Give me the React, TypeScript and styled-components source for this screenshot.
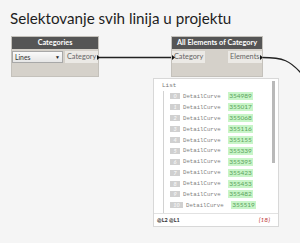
import styled, { createGlobalStyle } from "styled-components"

const GlobalStyle = createGlobalStyle`
  html, body {
    margin: 0;
    padding: 0;
    background: #f5f5f5;
  }
  #root {
    width: 300px;
    height: 243px;
    overflow: hidden;
  }
`

const items = [
  "354989", "355017", "355068", "355116", "355155", "355339",
  "355395", "355423", "355453", "355482", "355519",
]

const Page = styled.div`
  position: relative;
  width: 300px;
  height: 243px;
  background: #f5f5f5;
  font-family: Lato, "Noto Sans", sans-serif;
  white-space: nowrap;
`

const Title = styled.h1`
  margin: 0;
  padding: 9px 0 0 10px;
  font-family: Lato, "Noto Sans", sans-serif;
  font-size: 15.2px;
  line-height: 18px;
  font-weight: 400;
  color: #1e1e1e;
`

const Wires = styled.svg`
  position: absolute;
  left: 0;
  top: 0;
  pointer-events: none;
`

const NodeBox = styled.div<{ $x: number; $w: number }>`
  position: absolute;
  left: ${p => p.$x}px;
  top: 37px;
  width: ${p => p.$w}px;
  display: flex;
  flex-direction: column;
  box-shadow: 0 0 0 1px #c4c1bb;
`

const NodeHeader = styled.div`
  height: 12px;
  background: #555555;
  color: #ffffff;
  font-size: 7.3px;
  font-weight: 700;
  line-height: 12px;
  text-align: center;
  overflow: hidden;
`

const NodeBody = styled.div`
  height: 27px;
  background: #d5d1ca;
  display: flex;
  justify-content: space-between;
  align-items: flex-start;
  padding-top: 2px;
  box-sizing: border-box;
`

const Port = styled.div<{ $w: number }>`
  width: ${p => p.$w}px;
  height: 12px;
  background: #ebe9e5;
  color: #666;
  font-size: 7.3px;
  line-height: 12px;
  padding-left: 2px;
  box-sizing: border-box;
  overflow: hidden;
`

const Dropdown = styled.div`
  width: 51px;
  height: 12px;
  background: linear-gradient(#fafafa, #e6e6e6);
  border: 1px solid #a8a8a8;
  box-sizing: border-box;
  display: flex;
  justify-content: space-between;
  align-items: center;
  padding: 0 2px;
  font-size: 6.8px;
  color: #333;
`

const Caret = styled.span`
  font-size: 5px;
  color: #222;
`

const Watch = styled.div`
  position: absolute;
  left: 153px;
  top: 78px;
  width: 126px;
  height: 149px;
  background: #ffffff;
  border: 1px solid #d8d8d8;
  box-sizing: border-box;
  display: flex;
  flex-direction: column;
`

const ListArea = styled.div`
  flex: 1;
  min-height: 0;
  position: relative;
  overflow: hidden;
  padding: 3px 0 0 8px;
  border-bottom: 1px solid #e2e2e2;
`

const ListLabel = styled.div`
  font-family: "Liberation Mono", monospace;
  font-size: 6px;
  color: #777;
  height: 9px;
  line-height: 8px;
`

const Tree = styled.div`
  margin-left: 1px;
  border-left: 1px solid #d2d2d2;
  padding-left: 6px;
  display: flex;
  flex-direction: column;
  min-height: 130px;
`

const Row = styled.div`
  height: 10.9px;
  flex-shrink: 0;
  display: flex;
  align-items: center;
`

const Index = styled.span<{ $wide?: boolean }>`
  width: ${p => (p.$wide ? 13 : 10)}px;
  height: 6px;
  background: #d0d0d0;
  color: #f4f4f4;
  font-style: italic;
  font-weight: 700;
  font-size: 5.5px;
  line-height: 6px;
  text-align: center;
`

const TypeName = styled.span`
  margin-left: 3px;
  width: 45px;
  font-family: "Liberation Mono", monospace;
  font-size: 5.7px;
  color: #808080;
`

const Value = styled.span`
  width: 25px;
  height: 8px;
  background: #c8f5c8;
  color: #5da35d;
  font-size: 6.5px;
  line-height: 8px;
  text-align: center;
`

const Scrollbar = styled.div`
  position: absolute;
  right: 3px;
  top: 2px;
  width: 3px;
  height: 82px;
  background: #b9b9b9;
`

const Footer = styled.div`
  height: 12px;
  flex-shrink: 0;
  display: flex;
  justify-content: space-between;
  align-items: center;
  padding: 0 8px 0 3px;
  line-height: 10px;
`

const Levels = styled.span`
  font-size: 5.5px;
  font-weight: 700;
  color: #333;
`

const Count = styled.span`
  font-size: 6.5px;
  font-style: italic;
  color: #c04040;
`

export default function App() {
  return (
    <Page>
      <GlobalStyle />
      <Title>Selektovanje svih linija u projektu</Title>

      <Wires width={300} height={243}>
        <path d="M98 57.5 H172" stroke="#222" strokeWidth={1.3} fill="none" />
        <path d="M262 57.5 C284 57.5 290 61 301 73" stroke="#222" strokeWidth={1.3} fill="none" />
      </Wires>

      <NodeBox $x={12} $w={86}>
        <NodeHeader>Categories</NodeHeader>
        <NodeBody>
          <Dropdown>
            <span>Lines</span>
            <Caret>▼</Caret>
          </Dropdown>
          <Port $w={33}>Category</Port>
        </NodeBody>
      </NodeBox>

      <NodeBox $x={172} $w={90}>
        <NodeHeader>All Elements of Category</NodeHeader>
        <NodeBody>
          <Port $w={33}>Category</Port>
          <Port $w={34}>Elements</Port>
        </NodeBody>
      </NodeBox>

      <Wires width={300} height={243}>
        <path d="M97 55 L100 57.5 L97 60 Z" fill="#111" />
        <path d="M172 55 L175 57.5 L172 60 Z" fill="#111" />
        <path d="M260 55 L263 57.5 L260 60 Z" fill="#111" />
      </Wires>

      <Watch>
        <ListArea>
          <ListLabel>List</ListLabel>
          <Tree>
            {items.map((v, i) => (
              <Row key={v}>
                <Index $wide={i >= 10}>{i}</Index>
                <TypeName>DetailCurve</TypeName>
                <Value>{v}</Value>
              </Row>
            ))}
          </Tree>
          <Scrollbar />
        </ListArea>
        <Footer>
          <Levels>@L2 @L1</Levels>
          <Count>{"{18}"}</Count>
        </Footer>
      </Watch>
    </Page>
  )
}
